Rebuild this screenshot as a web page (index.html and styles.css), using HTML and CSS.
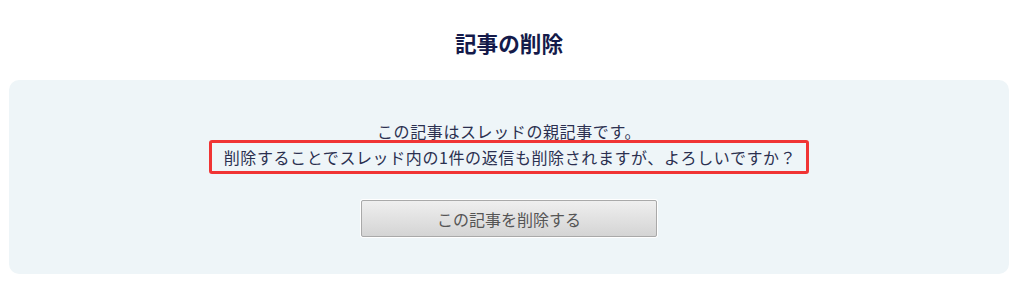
FILE: index.html
```html
<!DOCTYPE html>
<html lang="ja">
<head>
  <meta charset="UTF-8">
  <meta name="viewport" content="width=device-width, initial-scale=1.0">
  <title>記事の削除</title>
  <link rel="stylesheet" href="styles.css">
</head>
<body>
  <h2 class="page-title">記事の削除</h2>
  <div class="confirm-box">
    <div class="message">
      <div class="message-line">この記事はスレッドの親記事です。</div>
      <div class="warning">削除することでスレッド内の1件の返信も削除されますが、よろしいですか？</div>
    </div>
    <div class="actions">
      <button class="delete-button">この記事を削除する</button>
    </div>
  </div>
</body>
</html>
```

FILE: styles.css
```css
body {
  font-family: "Noto Sans CJK JP", "Noto Sans", sans-serif;
  background-color: #fff;
  margin: 0;
  padding: 0 9px;
  color: #2b3050;
}

.page-title {
  margin: 0;
  padding-top: 29px;
  height: 51px;
  box-sizing: border-box;
  font-size: 21.6px;
  line-height: 28px;
  text-align: center;
  color: #141a4a;
}

.confirm-box {
  background-color: #eef5f8;
  border-radius: 10px;
  height: 194px;
  margin-top: 29px;
  padding-top: 38px;
  box-sizing: border-box;
  text-align: center;
}

.message {
  font-size: 16px;
  letter-spacing: 0.6px;
}

.message-line {
  line-height: 26px;
}

.warning {
  display: inline-block;
  border: 3px solid #f03434;
  border-radius: 3px;
  padding: 0 10px 0 12px;
  line-height: 28px;
  margin-top: -4px;
  vertical-align: top;
}

.actions {
  margin-top: 26px;
  line-height: 0;
}

.delete-button {
  font-family: inherit;
  width: 296px;
  height: 37px;
  font-size: 16px;
  line-height: normal;
  color: #555;
  background: linear-gradient(#efefef, #d4d4d4);
  border: 1px solid #a9a9a9;
  border-radius: 2px;
  box-shadow: 0 0 0 1px #fff;
  cursor: pointer;
}
```
